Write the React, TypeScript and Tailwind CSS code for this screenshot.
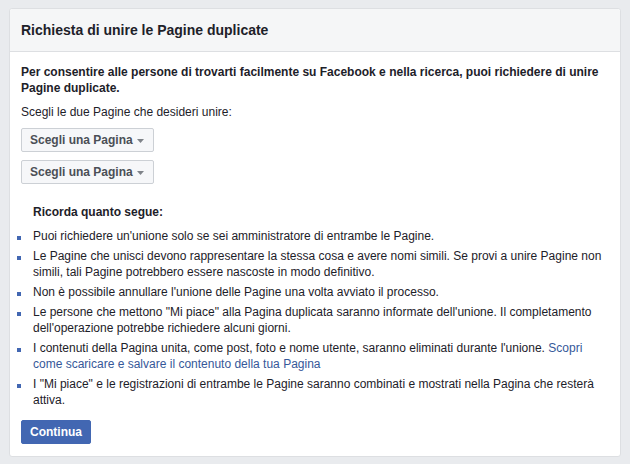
import { useState } from 'react';

const rules = [
  { text: "Puoi richiedere un'unione solo se sei amministratore di entrambe le Pagine." },
  {
    text: 'Le Pagine che unisci devono rappresentare la stessa cosa e avere nomi simili. Se provi a unire Pagine non simili, tali Pagine potrebbero essere nascoste in modo definitivo.',
  },
  { text: "Non è possibile annullare l'unione delle Pagine una volta avviato il processo." },
  {
    text: 'Le persone che mettono "Mi piace" alla Pagina duplicata saranno informate dell\'unione. Il completamento dell\'operazione potrebbe richiedere alcuni giorni.',
  },
  {
    text: "I contenuti della Pagina unita, come post, foto e nome utente, saranno eliminati durante l'unione. ",
    link: 'Scopri come scaricare e salvare il contenuto della tua Pagina',
  },
  {
    text: 'I "Mi piace" e le registrazioni di entrambe le Pagine saranno combinati e mostrati nella Pagina che resterà attiva.',
  },
];

function PageSelector() {
  const [open, setOpen] = useState(false);

  return (
    <button
      type="button"
      onClick={() => setOpen(!open)}
      className="flex h-6 items-center gap-1 rounded-[2px] border border-[#ccd0d5] bg-[#f6f7f9] pl-2 pr-[9px] text-[12px] font-bold text-[#4b4f56]"
    >
      Scegli una Pagina
      <svg width="7" height="4" viewBox="0 0 7 4" className="mt-[1px]">
        <path d="M0 0h7L3.5 4z" fill="#7f8389" />
      </svg>
    </button>
  );
}

export default function App() {
  return (
    <div className="min-h-[464px] bg-[#e9ebee] pt-2 pl-[9px] pr-[9px] font-['Liberation_Sans',Arial,sans-serif] text-[#1d2129]">
      <div className="rounded-[3px] border border-[#dddfe2] bg-white">
        <div className="flex h-[43px] items-center border-b border-[#dddfe2] bg-[#f5f6f7] px-[11px] rounded-t-[3px]">
          <h2 className="text-[14px] font-bold text-[#1d2129]">Richiesta di unire le Pagine duplicate</h2>
        </div>

        <div className="px-[11px] pt-3 pb-3 text-[12px] leading-4">
          <p className="font-bold">
            Per consentire alle persone di trovarti facilmente su Facebook e nella ricerca, puoi richiedere di unire
            Pagine duplicate.
          </p>
          <p className="mt-2">Scegli le due Pagine che desideri unire:</p>

          <div className="mt-2 flex flex-col items-start gap-2">
            <PageSelector />
            <PageSelector />
          </div>

          <p className="mt-5 pl-3 font-bold">Ricorda quanto segue:</p>

          <ul className="mt-2 flex flex-col gap-1">
            {rules.map((rule, idx) => (
              <li key={idx} className="flex">
                <span className="ml-[-4px] mr-3 mt-[8px] h-1 w-1 shrink-0 bg-[#4267b2]" />
                <span>
                  {rule.text}
                  {rule.link && <a className="text-[#365899] cursor-pointer">{rule.link}</a>}
                </span>
              </li>
            ))}
          </ul>

          <button
            type="button"
            className="mt-3 h-6 rounded-[2px] border border-[#4267b2] bg-[#4267b2] px-2 text-[12px] font-bold text-white"
          >
            Continua
          </button>
        </div>
      </div>
    </div>
  );
}
